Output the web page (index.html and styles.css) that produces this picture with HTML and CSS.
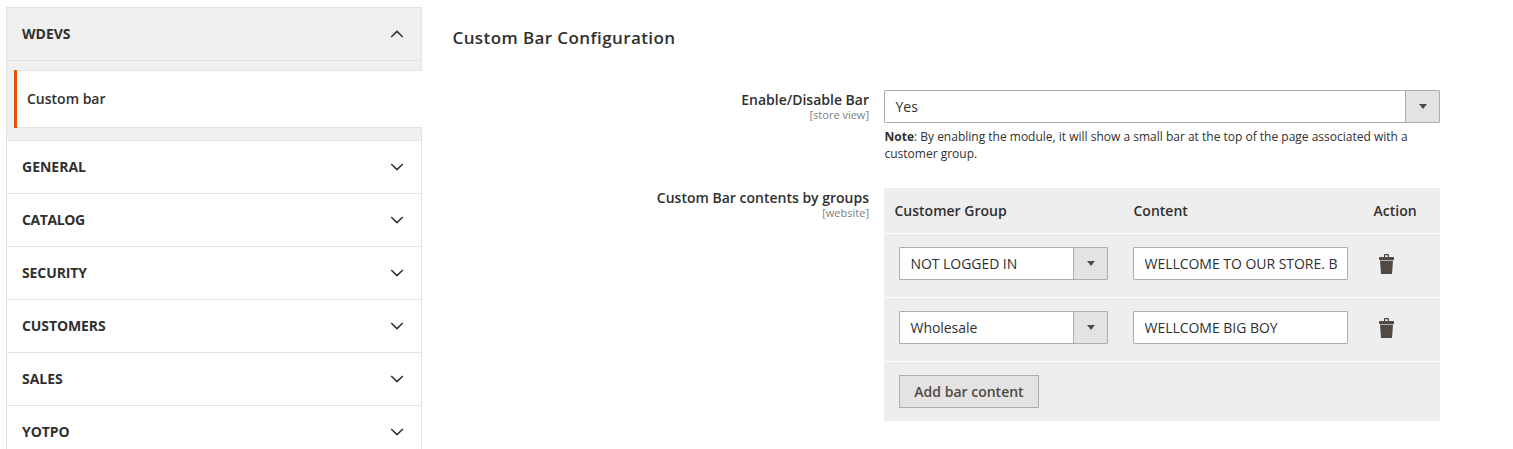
FILE: index.html
```
<!DOCTYPE html>
<html lang="en">
<head>
<meta charset="utf-8">
<title>Custom Bar Configuration</title>
<link rel="stylesheet" href="styles.css">
</head>
<body>
<svg class="defs" width="0" height="0">
  <symbol id="down" viewBox="0 0 14 8"><path d="M1.2 1 7 6.6 12.8 1" fill="none" stroke="#303030" stroke-width="1.5"/></symbol>
  <symbol id="up" viewBox="0 0 14 8"><path d="M1.2 7 7 1.4 12.8 7" fill="none" stroke="#303030" stroke-width="1.5"/></symbol>
  <symbol id="trash" viewBox="0 0 15 20"><path fill="#514943" fill-rule="evenodd" d="M5 3V1Q5 0 6 0H9Q10 0 10 1V3H14Q15 3 15 4V6H0V4Q0 3 1 3ZM6.2 3H8.8V1.2H6.2ZM1 7H14L13 20H2Z"/><path fill="#b5b0ad" d="M1 6H14V7H1Z"/></symbol>
</svg>
<div class="page">
  <nav class="sidebar">
    <div class="tab tab-open"><span>WDEVS</span><svg class="chevron"><use href="#up"/></svg></div>
    <div class="subnav"><a class="subnav-item">Custom bar</a></div>
    <div class="tab"><span>GENERAL</span><svg class="chevron"><use href="#down"/></svg></div>
    <div class="tab"><span class="tight">CATALOG</span><svg class="chevron"><use href="#down"/></svg></div>
    <div class="tab"><span class="snug">SECURITY</span><svg class="chevron"><use href="#down"/></svg></div>
    <div class="tab"><span class="snug">CUSTOMERS</span><svg class="chevron"><use href="#down"/></svg></div>
    <div class="tab"><span>SALES</span><svg class="chevron"><use href="#down"/></svg></div>
    <div class="tab"><span class="snug">YOTPO</span><svg class="chevron"><use href="#down"/></svg></div>
  </nav>
  <main class="content">
    <h1 class="title">Custom Bar Configuration</h1>
    <div class="field">
      <div class="label">Enable/Disable Bar<span class="scope">[store view]</span></div>
      <div class="control">
        <div class="select"><span class="value">Yes</span><span class="toggle"></span></div>
        <p class="note"><b>Note</b>: By enabling the module, it will show a small bar at the top of the page associated with a customer group.</p>
      </div>
    </div>
    <div class="field">
      <div class="label">Custom Bar contents by groups<span class="scope">[website]</span></div>
      <div class="control table">
        <div class="row head"><span>Customer Group</span><span>Content</span><span>Action</span></div>
        <div class="row">
          <div class="select"><span class="value">NOT LOGGED IN</span><span class="toggle"></span></div>
          <div class="input"><span class="input-text">WELLCOME TO OUR STORE. B</span></div>
          <svg class="trash"><use href="#trash"/></svg>
        </div>
        <div class="row">
          <div class="select"><span class="value">Wholesale</span><span class="toggle"></span></div>
          <div class="input"><span class="input-text">WELLCOME BIG BOY</span></div>
          <svg class="trash"><use href="#trash"/></svg>
        </div>
        <div class="foot"><button class="add">Add bar content</button></div>
      </div>
    </div>
  </main>
</div>
</body>
</html>
```
FILE: styles.css
```
* { box-sizing: border-box; }
body {
  margin: 0;
  height: 449px;
  overflow: hidden;
  background: #fff;
  color: #303030;
  font: 14px/19px "Open Sans", "Noto Sans", sans-serif;
}
.defs { display: block; }
.page { display: flex; padding: 7px 0 0 6px; }

.sidebar {
  flex: none;
  width: 416px;
  height: 460px;
  border: 1px solid #e3e3e3;
}
.tab {
  display: flex;
  align-items: center;
  justify-content: space-between;
  height: 53px;
  padding: 0 17px 0 15px;
  border-bottom: 1px solid #e3e3e3;
  font-weight: 700;
}
.tab span { padding-bottom: 2px; }
.tab .tight { letter-spacing: -.4px; }
.tab .snug { letter-spacing: -.1px; }
.tab-open, .subnav { background: #f0f0f0; }
.chevron { width: 14px; height: 8px; }
.subnav {
  height: 80px;
  padding: 9px 0 12px 7px;
  margin-right: -1px;
  border-right: 1px solid #e3e3e3;
  border-bottom: 1px solid #e3e3e3;
}
.subnav-item {
  display: flex;
  align-items: center;
  height: 58px;
  margin-right: -1px;
  padding: 0 0 2px 13px;
  background:
    linear-gradient(#e3e3e3, #e3e3e3) top / 100% 1px no-repeat,
    linear-gradient(#e3e3e3, #e3e3e3) bottom / 100% 1px no-repeat,
    #fff;
  box-shadow: inset 3px 0 #eb5202;
  font-weight: 600;
}

.content { width: 988px; margin-left: 30px; }
.title {
  margin: 19px 0 40px .5px;
  font-size: 17px;
  line-height: 24px;
  font-weight: 600;
  letter-spacing: .4px;
}
.field { display: flex; justify-content: space-between; }
.label {
  width: 417px;
  text-align: right;
  font-weight: 600;
}
.scope {
  display: block;
  color: #808080;
  font-size: 11px;
  line-height: 12px;
  font-weight: 400;
}
.control { width: 556px; }
.select {
  display: flex;
  justify-content: space-between;
  height: 33px;
  border: 1px solid #adadad;
  border-radius: 1px;
  background: #fff;
}
.value { padding-left: 10.5px; line-height: 31px; }
.toggle {
  display: flex;
  align-items: center;
  justify-content: center;
  width: 34px;
  border-left: 1px solid #adadad;
  background: #e3e3e3;
}
.toggle::before {
  content: "";
  border: solid transparent;
  border-width: 5px 4px 0;
  border-top-color: #514943;
}
.note {
  margin: 5px 0 26px .5px;
  font-size: 12px;
  line-height: 17px;
}
.note b { font-weight: 700; }
.table { background: #eee; }
.row {
  display: grid;
  grid-template-columns: 209px 215px 15px;
  column-gap: 25px;
  align-items: start;
  height: 64px;
  padding: 13px 0 0 15px;
  border-bottom: 1px solid #fff;
}
.row .value { letter-spacing: -.05px; }
.row .trash { margin: 7px 0 0 6px; }
.head {
  grid-template-columns: 239px 240px 60px;
  column-gap: 0;
  align-items: center;
  height: 46px;
  padding: 0 0 0 10.5px;
  font-weight: 600;
}
.input {
  height: 33px;
  padding: 0 8px 0 10.5px;
  border: 1px solid #adadad;
  border-radius: 1px;
  background: #fff;
  line-height: 31px;
}
.input-text {
  display: block;
  overflow: hidden;
  white-space: nowrap;
  letter-spacing: -.03px;
}
.trash { width: 15px; height: 20px; }
.foot { height: 59px; padding: 13px 15px; }
.add {
  display: block;
  width: 140px;
  height: 33px;
  padding: 0;
  border: 1px solid #adadad;
  background: #e3e3e3;
  color: #514943;
  font: 600 14px/31px "Open Sans", "Noto Sans", sans-serif;
}
```
